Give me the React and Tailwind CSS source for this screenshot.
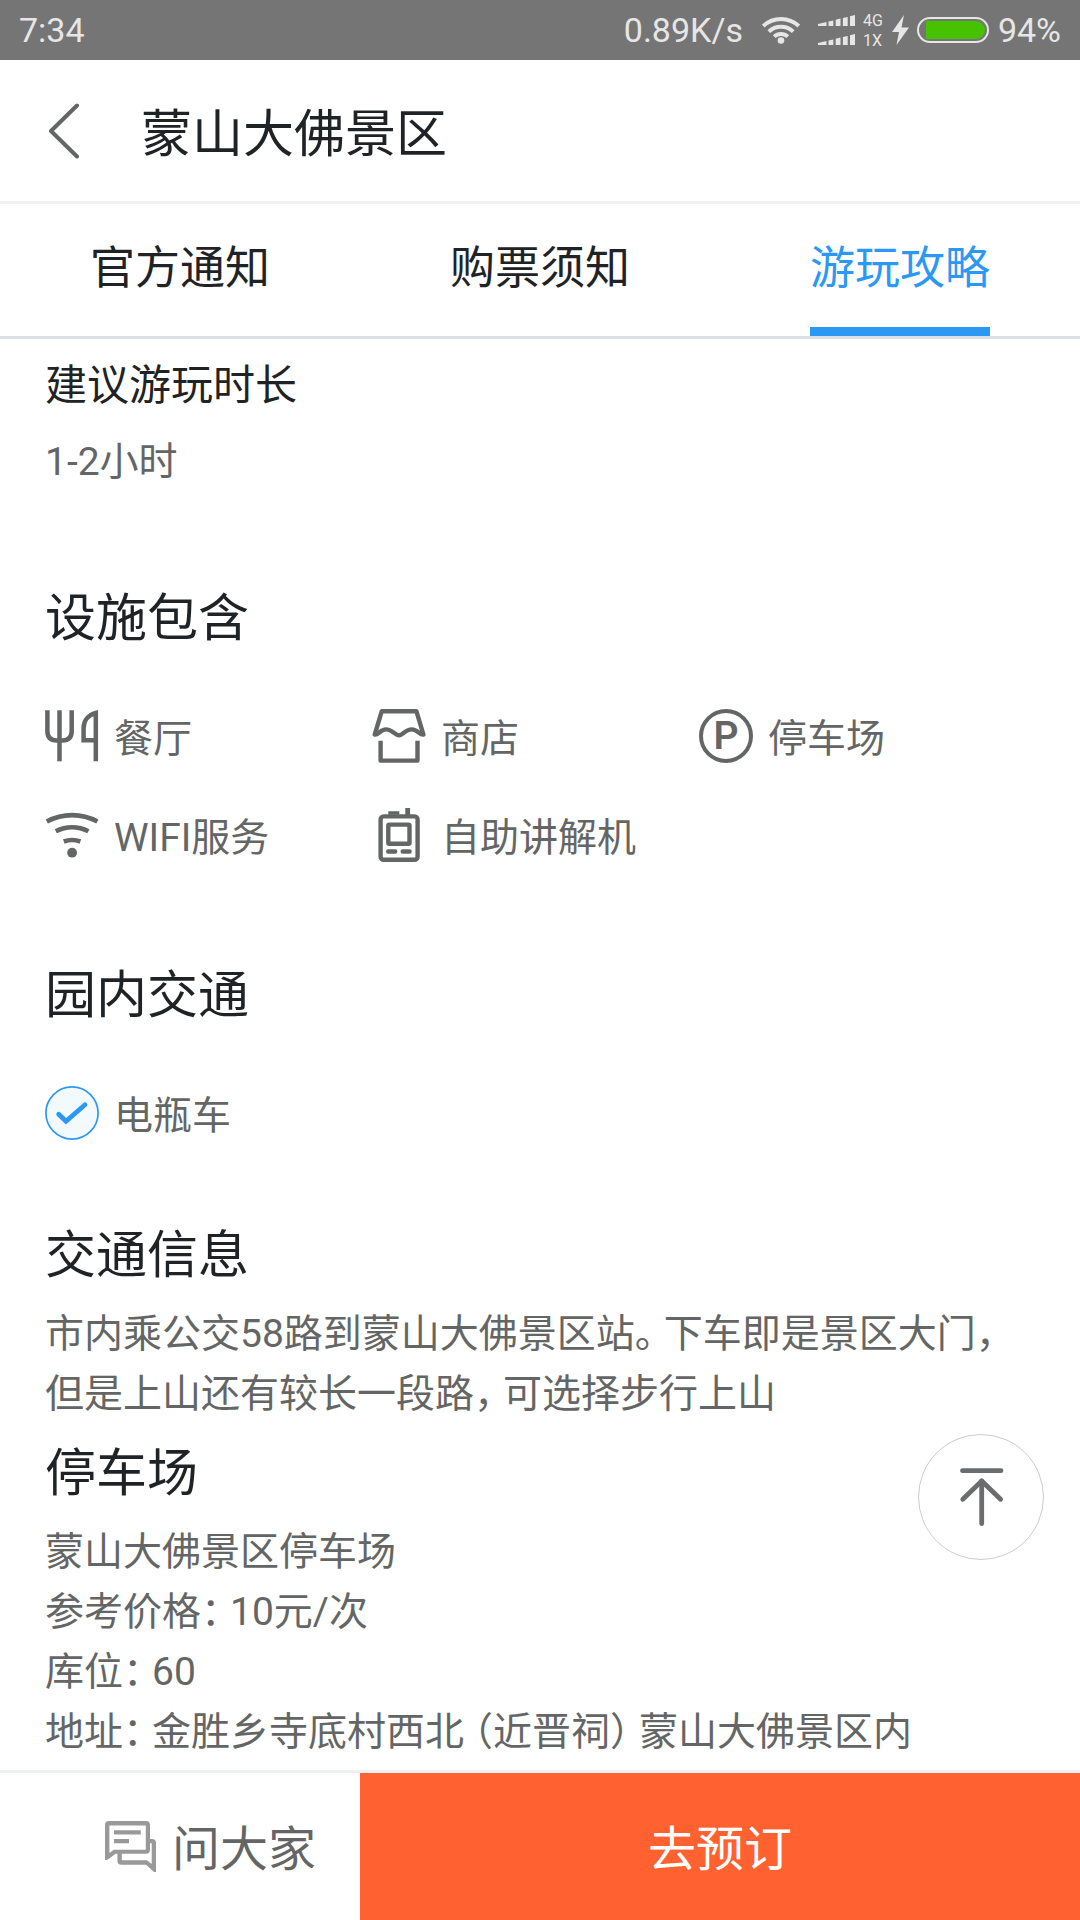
import React from "react";

function StatusWifi() {
  return (
    <svg width="40" height="30" viewBox="0 0 40 30" fill="none" stroke="#e6e6e6" strokeWidth="4" aria-hidden="true">
      <path d="M2.2 11A26 26 0 0 1 37.8 11" />
      <path d="M7.8 16.6A18 18 0 0 1 32.2 16.6" />
      <path d="M13.2 21.6A10 10 0 0 1 26.8 21.6" />
      <circle cx="20" cy="25.5" r="3.3" fill="#e6e6e6" stroke="none" />
    </svg>
  );
}

function SignalBars() {
  return (
    <svg width="37" height="11" viewBox="0 0 37 11" fill="#e6e6e6" aria-hidden="true">
      <path d="M0 9L8.5 7V11H0Z" />
      <path d="M10.5 6.4L15.3 5.4V11H10.5Z" />
      <path d="M17.7 4.8L22.5 3.6V11H17.7Z" />
      <path d="M24.9 3L29.7 2V11H24.9Z" />
      <path d="M32 1.2L37 0V11H32Z" />
    </svg>
  );
}

function StatusBar() {
  return (
    <div className="flex h-[60px] items-center justify-between bg-[#757575] px-[19px] text-[34px] leading-[60px] text-[#e6e6e6]">
      <span>7:34</span>
      <div className="flex items-center">
        <span>0.89K/s</span>
        <span className="ml-[18px]">
          <StatusWifi />
        </span>
        <div className="ml-[17px] flex flex-col gap-2">
          <SignalBars />
          <SignalBars />
        </div>
        <div className="ml-2 flex flex-col pt-0.5 text-[16px] leading-5">
          <span>4G</span>
          <span>1X</span>
        </div>
        <svg className="ml-[9px]" width="17" height="30" viewBox="0 0 17 30" fill="#e6e6e6" aria-hidden="true">
          <path d="M12 0L0 17H7L4.5 30L17 12.5H9.5Z" />
        </svg>
        <div className="ml-2 h-[26px] w-[72px] rounded-full border-2 border-[#e6e6e6] py-0.5 pr-0.5 pl-[7px]">
          <div className="h-full rounded-l-sm rounded-r-full bg-[#47c200]" />
        </div>
        <span className="ml-[9px]">94%</span>
      </div>
    </div>
  );
}

function RestaurantIcon() {
  return (
    <svg width="54" height="54" viewBox="0 0 54 54" fill="none" stroke="#646666" strokeWidth="4.5" aria-hidden="true">
      <path d="M2.4 1.3V22Q2.4 31.5 11.5 31.5H17.5Q26.7 31.5 26.7 22V1.3" />
      <path d="M14.5 1.3V52.3" />
      <path d="M50.8 52.3V4C43 6 38.6 12 38.6 19V31.2H50.8" />
    </svg>
  );
}

function ShopIcon() {
  return (
    <svg width="54" height="54" viewBox="0 0 54 54" fill="none" stroke="#646666" strokeWidth="4.4" strokeLinejoin="round" aria-hidden="true">
      <path d="M9.8 2.2H44.4L51.4 25.6C47.5 26.4 46 20.4 39.8 20.4S30.5 26.4 27 26.4S20 20.4 14 20.4S6.5 26.4 2.7 25.6Z" />
      <path d="M8.6 31.7V51.6H45.5V31.7" />
    </svg>
  );
}

function ParkingIcon() {
  return (
    <span className="flex size-[54px] items-center justify-center rounded-full border-4 border-[#646666] text-[39px] leading-[46px] font-semibold" aria-hidden="true">
      P
    </span>
  );
}

function WifiIcon() {
  return (
    <svg width="54" height="54" viewBox="0 0 54 54" fill="none" stroke="#646666" strokeWidth="4.6" aria-hidden="true">
      <path d="M1.8 13.6A53 53 0 0 1 52.4 13.6" />
      <path d="M10.8 23.2A36 36 0 0 1 43.4 23.2" />
      <path d="M18.8 33.5A24 24 0 0 1 35.4 33.5" />
      <circle cx="27.1" cy="44.7" r="4.9" fill="#646666" stroke="none" />
    </svg>
  );
}

function GuideIcon() {
  return (
    <svg width="54" height="54" viewBox="0 0 54 54" fill="none" stroke="#646666" strokeWidth="4.4" aria-hidden="true">
      <rect x="8.6" y="8.4" width="37" height="43.4" rx="3" />
      <rect x="16.3" y="16.6" width="21.2" height="19.2" rx="1" />
      <path d="M16.2 43.5H23.2M30.7 43.5H37.6" strokeLinecap="round" />
      <path d="M16.3 5H27.3" strokeWidth="3.5" />
      <path d="M35.7 0V7" strokeWidth="4.8" />
    </svg>
  );
}

function CheckIcon() {
  return (
    <svg width="54" height="54" viewBox="0 0 54 54" fill="none" stroke="#2b99f4" aria-hidden="true">
      <circle cx="27" cy="27" r="26.1" fill="#f2fafe" strokeWidth="1.7" />
      <path d="M13.7 28.2L21 35.3L40 18.8" strokeWidth="4.8" strokeLinecap="round" strokeLinejoin="miter" />
    </svg>
  );
}

function ChatIcon() {
  return (
    <svg width="51" height="51" viewBox="0 0 51 51" fill="#999999" aria-hidden="true">
      <path fillRule="evenodd" d="M4 0H41A4 4 0 0 1 45 4V28.8A4 4 0 0 1 41 32.8H10.7L2 39H0V4A4 4 0 0 1 4 0ZM4.4 4.4V32L8.8 28.8H40.8V4.4Z" />
      <path d="M9 9.2H35.8V13.4H9ZM9 18H24V22.3H9Z" />
      <path d="M12.4 32H16.8V39.3H42L46.7 43V22.3H44V18H47A4 4 0 0 1 51 22V51H49L41 43.7H16.4A4 4 0 0 1 12.4 39.7Z" />
    </svg>
  );
}

const tabs = ["官方通知", "购票须知", "游玩攻略"];
const activeTab = "游玩攻略";

const facilities = [
  { label: "餐厅", Icon: RestaurantIcon },
  { label: "商店", Icon: ShopIcon },
  { label: "停车场", Icon: ParkingIcon },
  { label: "WIFI服务", Icon: WifiIcon },
  { label: "自助讲解机", Icon: GuideIcon },
];

function SectionTitle({ children }) {
  return <h2 className="text-[51px] leading-[72px] text-[#1f2326]">{children}</h2>;
}

function Item({ Icon, label }) {
  return (
    <li className="flex h-[54px] items-center gap-[15px]">
      <Icon />
      <span className="pt-1.5 whitespace-nowrap">{label}</span>
    </li>
  );
}

/* Full-width punctuation set in a compact cell. */
function Mark({ children, open }) {
  return (
    <span className={open ? "inline-block w-[29px] text-right [font-feature-settings:'halt']" : "inline-block w-[29px] [font-feature-settings:'halt']"}>
      {children}
    </span>
  );
}

export default function App() {
  return (
    <div className="flex min-h-screen flex-col bg-white font-[Roboto,'Noto_Sans_CJK_SC',sans-serif] font-normal text-[#646666]" lang="zh-CN">
      <StatusBar />

      <header className="flex h-36 items-center border-b-3 border-[#f0f0f0] pl-12">
        <button type="button" aria-label="返回" className="shrink-0">
          <svg width="32" height="56" viewBox="0 0 32 56" fill="none" stroke="#646666" strokeWidth="4" strokeLinecap="round" strokeLinejoin="round" aria-hidden="true">
            <path d="M29 2.5L3 28L29 53.5" />
          </svg>
        </button>
        <h1 className="ml-[61px] pt-2 text-[51px] leading-[72px] text-[#1f2326]">蒙山大佛景区</h1>
      </header>

      <nav className="grid h-[135px] grid-cols-3 justify-items-center border-b-3 border-[#dce0e4]">
        {tabs.map((tab) => (
          <button
            key={tab}
            type="button"
            className={
              tab === activeTab
                ? "border-b-9 border-[#2b99f4] pt-1.5 text-[45px] leading-[60px] text-[#2b99f4]"
                : "border-b-9 border-transparent pt-1.5 text-[45px] leading-[60px] text-[#1f2326]"
            }
          >
            {tab}
          </button>
        ))}
      </nav>

      <main className="flex-1 pt-[17px] pr-[54px] pb-[7px] pl-[45px] text-[39px] leading-[60px]">
        <section>
          <h3 className="text-[42px] leading-[60px] text-[#1f2326]">建议游玩时长</h3>
          <p className="mt-4">1-2小时</p>
        </section>

        <section className="mt-[91px]">
          <SectionTitle>设施包含</SectionTitle>
          <ul className="mt-[54px] grid grid-cols-3 gap-y-[45px]">
            {facilities.map((f) => (
              <Item key={f.label} {...f} />
            ))}
          </ul>
        </section>

        <section className="mt-[98px]">
          <SectionTitle>园内交通</SectionTitle>
          <ul className="mt-[54px]">
            <Item Icon={CheckIcon} label="电瓶车" />
          </ul>
        </section>

        <section className="mt-20">
          <SectionTitle>交通信息</SectionTitle>
          <p className="mt-3">
            市内乘公交58路到蒙山大佛景区站<Mark>。</Mark>下车即是景区大门<Mark>，</Mark>但是上山还有较长一段路<Mark>，</Mark>可选择步行上山
          </p>
        </section>

        <section className="mt-3.5">
          <SectionTitle>停车场</SectionTitle>
          <div className="mt-3">
            <p>蒙山大佛景区停车场</p>
            <p>参考价格<Mark>：</Mark>10元/次</p>
            <p>库位<Mark>：</Mark>60</p>
            <p>地址<Mark>：</Mark>金胜乡寺底村西北<Mark open>（</Mark>近晋祠<Mark>）</Mark>蒙山大佛景区内</p>
          </div>
        </section>
      </main>

      <footer className="sticky bottom-0 grid h-[150px] grid-cols-3 border-t-3 border-[#eef0f5] bg-white">
        <button
          type="button"
          aria-label="回到顶部"
          className="absolute right-9 bottom-[360px] size-[126px] rounded-full border border-[#cccccc] bg-white"
        >
          <svg className="-m-px" width="126" height="126" viewBox="0 0 126 126" fill="none" stroke="#6a6c6d" strokeWidth="4.8" strokeLinecap="round" strokeLinejoin="round" aria-hidden="true">
            <path d="M44.5 36.7H83" />
            <path d="M63.7 47V89.5" />
            <path d="M44.8 65.3L63.7 47L82.6 65.3" />
          </svg>
        </button>
        <button type="button" className="flex items-center gap-4 pl-[105px] text-[48px]">
          <ChatIcon />
          <span className="pt-1.5 whitespace-nowrap">问大家</span>
        </button>
        <button type="button" className="col-span-2 bg-[#ff6131] pt-1.5 text-[48px] text-white">
          去预订
        </button>
      </footer>
    </div>
  );
}
